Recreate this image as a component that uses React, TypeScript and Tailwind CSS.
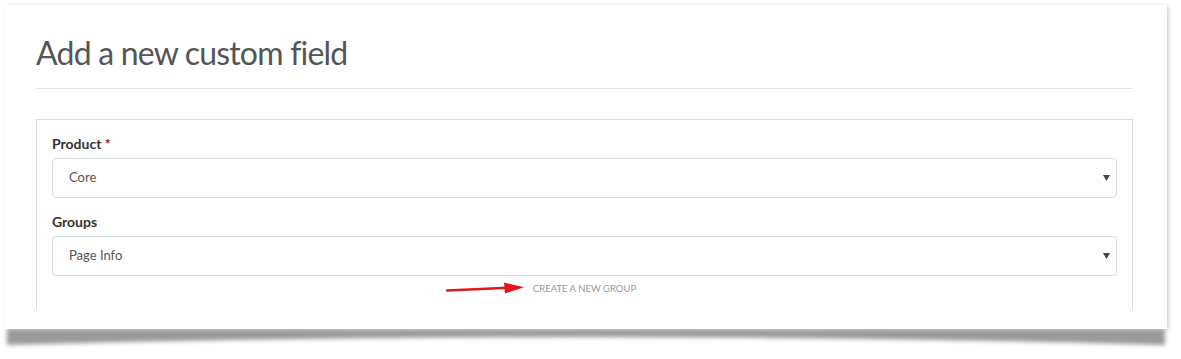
import React from 'react';

const font = { fontFamily: '"Lato", "Open Sans", sans-serif' };

const SelectBox = ({ value }: { value: string }) => (
  <div className="flex h-[40px] items-center justify-between rounded-[4px] border border-[#d3dfe3] bg-white pl-[16px] pr-[6px]">
    <span className="text-[13px] text-[#555]">{value}</span>
    <svg width="7" height="6" viewBox="0 0 7 6">
      <path d="M0 0 L7 0 L3.5 6 Z" fill="#444" />
    </svg>
  </div>
);

const App = () => {
  return (
    <div className="h-[359px] w-[1181px] bg-white pl-[5px] pt-[5px]" style={font}>
      <div className="w-[1162px] bg-white pb-[20px] shadow-[2px_1px_4px_rgba(0,0,0,0.18)]">
        <div className="h-[304px] overflow-hidden pl-[31px] pr-[34px]">
          <h1 className="pt-[28px] text-[32px] leading-[40px] font-normal tracking-[-0.8px] text-[#555]">
            Add a new custom field
          </h1>
          <div className="mt-[15px] border-t border-[#e5e5e5]" />

          <div className="mt-[30px] h-[300px] border border-[#dcdcdc] px-[15px] pt-[14px]">
            <label className="block text-[14px] leading-[20px] font-bold text-[#333]">
              Product <span className="text-[#c00]">*</span>
            </label>
            <div className="mt-[4px]">
              <SelectBox value="Core" />
            </div>

            <label className="mt-[14px] block text-[14px] leading-[20px] font-bold text-[#333]">
              Groups
            </label>
            <div className="mt-[4px]">
              <SelectBox value="Page Info" />
            </div>

            <div className="mt-[6px] flex justify-center">
              <span className="relative text-[9.5px] text-[#999] uppercase">
                <svg width="80" height="14" viewBox="0 0 80 14" className="absolute top-[-1px] right-full mr-[7px]">
                  <path d="M1 9.5 L62 6.8" stroke="#e3161b" strokeWidth="2.4" strokeLinecap="round" />
                  <path d="M58 1.5 L78 6.2 L59 12.5 Z" fill="#e3161b" />
                </svg>
                Create a new group
              </span>
            </div>
          </div>
        </div>
      </div>
      <svg width="1170" height="24" viewBox="0 0 1170 24" className="-ml-[4px] block">
        <defs>
          <filter id="blur" x="-5%" y="-50%" width="110%" height="200%">
            <feGaussianBlur stdDeviation="2" />
          </filter>
        </defs>
        <path d="M6 0 L1164 0 L1164 16 Q585 0 6 16 Z" fill="#9a9a9a" filter="url(#blur)" />
      </svg>
    </div>
  );
};

export default App;
